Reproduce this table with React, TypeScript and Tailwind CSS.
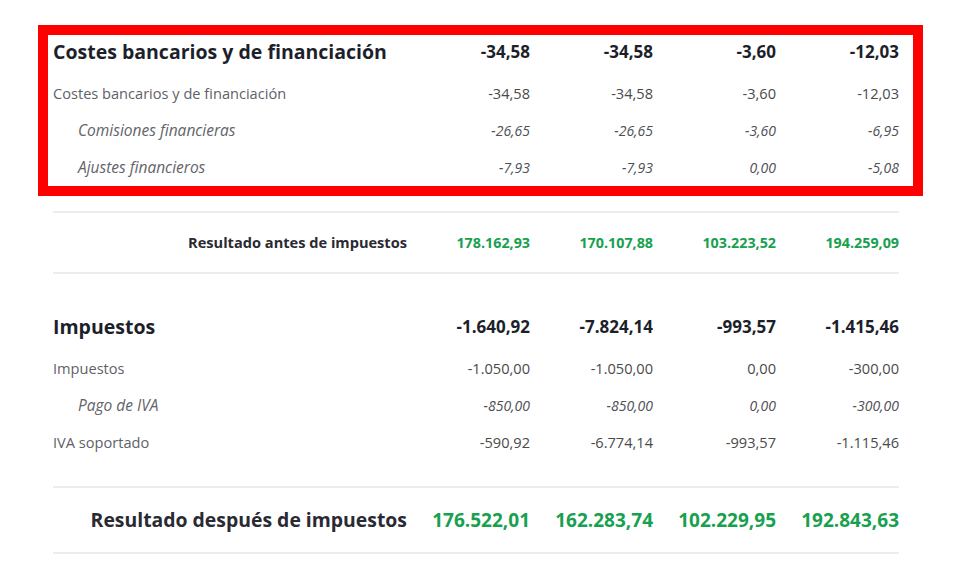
const font = { fontFamily: '"Open Sans", "Noto Sans", sans-serif' };

type Line = { label: string; values: string[]; sub?: boolean };

type Group = { title: string; totals: string[]; lines: Line[] };

const bank: Group = {
  title: "Costes bancarios y de financiación",
  totals: ["-34,58", "-34,58", "-3,60", "-12,03"],
  lines: [
    { label: "Costes bancarios y de financiación", values: ["-34,58", "-34,58", "-3,60", "-12,03"] },
    { label: "Comisiones financieras", values: ["-26,65", "-26,65", "-3,60", "-6,95"], sub: true },
    { label: "Ajustes financieros", values: ["-7,93", "-7,93", "0,00", "-5,08"], sub: true },
  ],
};

const taxes: Group = {
  title: "Impuestos",
  totals: ["-1.640,92", "-7.824,14", "-993,57", "-1.415,46"],
  lines: [
    { label: "Impuestos", values: ["-1.050,00", "-1.050,00", "0,00", "-300,00"] },
    { label: "Pago de IVA", values: ["-850,00", "-850,00", "0,00", "-300,00"], sub: true },
    { label: "IVA soportado", values: ["-590,92", "-6.774,14", "-993,57", "-1.115,46"] },
  ],
};

function GroupBlock({ group }: { group: Group }) {
  return (
    <div>
      <div className="flex h-[34px] items-center">
        <div className="w-[354px] text-[19.5px] font-bold text-[#1d1f2b]">{group.title}</div>
        {group.totals.map((v, i) => (
          <div key={i} className="w-[123px] text-right text-[17px] font-bold text-[#1d1f2b]">
            {v}
          </div>
        ))}
      </div>
      <div className="mt-[6px]">
        {group.lines.map((line, i) => (
          <div key={i} className="flex h-[37px] items-center">
            <div
              className={`w-[354px] ${
                line.sub ? "pl-[25px] text-[15.5px] italic text-[#636369]" : "text-[14.6px] text-[#5f5f68]"
              }`}
            >
              {line.label}
            </div>
            {line.values.map((v, j) => (
              <div
                key={j}
                className={`w-[123px] text-right ${
                  line.sub ? "text-[14px] italic text-[#4f4f55]" : "text-[14.6px] text-[#4a4a4a]"
                }`}
              >
                {v}
              </div>
            ))}
          </div>
        ))}
      </div>
    </div>
  );
}

function Divider() {
  return <div className="h-[2px] bg-[#ececec]" />;
}

export default function App() {
  return (
    <div className="min-h-screen bg-white pt-[25px]" style={font}>
      <div className="mx-auto w-[846px] translate-x-[-4px]">
        <div className="ml-[-15px] mr-[-24px] border-[10px] border-[#ff0000] pl-[5px] pr-[14px]">
          <GroupBlock group={bank} />
        </div>

        <div className="mt-[15px]">
          <Divider />
          <div className="flex h-[59px] items-center">
            <div className="w-[354px] text-right text-[14.6px] font-bold text-[#2a2a33]">
              Resultado antes de impuestos
            </div>
            {["178.162,93", "170.107,88", "103.223,52", "194.259,09"].map((v, i) => (
              <div key={i} className="w-[123px] text-right text-[14.3px] font-bold text-[#17a14f]">
                {v}
              </div>
            ))}
          </div>
          <Divider />
        </div>

        <div className="mt-[36px]">
          <GroupBlock group={taxes} />
        </div>

        <div className="mt-[25px]">
          <Divider />
          <div className="flex h-[64px] items-center">
            <div className="w-[354px] text-right text-[19.4px] font-bold text-[#2a2a33]">
              Resultado después de impuestos
            </div>
            {["176.522,01", "162.283,74", "102.229,95", "192.843,63"].map((v, i) => (
              <div key={i} className="w-[123px] text-right text-[19px] font-bold text-[#17a14f]">
                {v}
              </div>
            ))}
          </div>
          <Divider />
        </div>
      </div>
    </div>
  );
}
